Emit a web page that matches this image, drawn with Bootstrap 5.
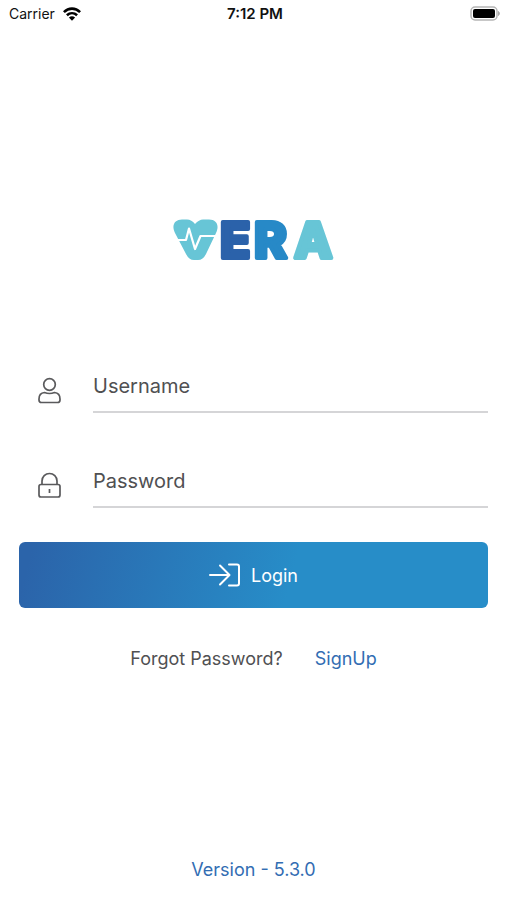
<!DOCTYPE html>
<html lang="en">
<head>
<meta charset="utf-8">
<meta name="viewport" content="width=device-width, initial-scale=1">
<title>VERA Login</title>
<link rel="stylesheet" href="https://cdn.jsdelivr.net/npm/bootstrap@5.3.0/dist/css/bootstrap.min.css">
<style>
  body { font-family: Inter, "Liberation Sans", sans-serif; color: #505052; background: #fff; }
  .status-bar { height: 28px; padding: 0 6px 0 9px; color: #111; font-size: 14px; line-height: 28px; }
  .status-bar .time { font-size: 15px; font-weight: 600; }
  .brand { margin: 174px 0 0; line-height: 0; }
  .brand text { font: 800 50px Inter, "Liberation Sans", sans-serif; stroke-width: 4px; stroke-linejoin: round; }
  .login-form { margin-top: 80px; padding: 0 19px; }
  .field { height: 55px; margin-bottom: 40px; }
  .field label { flex: 0 0 74px; padding: 19px 0 0 18px; line-height: 0; }
  .field .form-control { border-bottom: 2px solid #d5d5d7; border-radius: 0; padding: 13px 0 11px; font-size: 20px; line-height: 28px; color: #505052; height: 55px; background: none; }
  .field .form-control::placeholder { color: #505052; opacity: 1; }
  .field .form-control:focus { box-shadow: none; border-color: #2b67ac; }
  .btn-login { height: 66px; margin-top: -6px; border: 0; border-radius: 6px; color: #fff; font-size: 18px; background: linear-gradient(105deg, #2b64aa 3%, #278dc8 58%); }
  .btn-login:hover { color: #fff; }
  .links { margin-top: 37px; gap: 32px; font-size: 18px; line-height: 28px; }
  .blue { color: #326db3; }
  .version { font-size: 18px; line-height: 28px; padding-bottom: 16px; }
</style>
<script defer src="https://cdn.jsdelivr.net/npm/bootstrap@5.3.0/dist/js/bootstrap.bundle.min.js"></script>
</head>
<body class="d-flex flex-column min-vh-100">
<header class="status-bar row g-0 align-items-center">
  <div class="col d-flex align-items-center gap-2">
    <span>Carrier</span>
    <svg width="18" height="17" viewBox="1 0 18 17" fill="none" stroke="#000" stroke-width="2.600" aria-hidden="true">
      <path d="M1.900 6.100C6.600 1.400 13.400 1.400 18.100 6.100M4.900 9.300C7.900 6.500 12.100 6.500 15.100 9.300"/>
      <path d="M10 14.800 6.900 11.600Q10 9 13.100 11.600Z" fill="#000" stroke="none"/>
    </svg>
  </div>
  <div class="col-auto time">7:12 PM</div>
  <div class="col d-flex justify-content-end">
    <svg width="32" height="16" viewBox="0 0 32 16" aria-hidden="true">
      <rect x="2" y="1" width="26" height="13" rx="4" fill="#fff" stroke="#b5b5b5" stroke-width="1.500"/>
      <rect x="4" y="3" width="22" height="9" rx="2" fill="#000"/>
      <path d="M29.500 5.500v4q2-2 0-4" fill="#aaa" stroke="#aaa"/>
    </svg>
  </div>
</header>

<main class="flex-grow-1 d-flex flex-column">
  <h1 class="brand text-center">
    <svg width="164" height="76" viewBox="0 -11 164 76">
      <path d="M10 6.500H15Q19.500 6.500 23 11Q27 6.500 31 6.500H37C45 6.500 47.500 13 44 20L34 41Q31 47 26 47H22Q17 47 14 41L3 20C-1 12 3 6.500 10 6.500Z" fill="#67c5d6"/>
      <path d="M4 27H14L17 15.500L23 36L28.500 23H47" fill="none" stroke="#fff" stroke-width="2.200" stroke-linejoin="round"/>
      <text x="48" y="45" fill="#2b62aa" stroke="#2b62aa">E</text>
      <text x="82" y="45" fill="#2789c7" stroke="#2789c7">R</text>
      <text x="122" y="45" fill="#67c5d6" stroke="#67c5d6">A</text>
    </svg>
  </h1>

  <form class="login-form">
    <div class="field d-flex">
      <label for="username">
        <svg width="24" height="28" viewBox="0 0 24 28" fill="none" stroke="#5a5a5c" stroke-width="1.700" role="img" aria-label="Username">
          <circle cx="12.500" cy="7.500" r="5.800"/>
          <path d="M7.500 15.500Q12.500 17.500 17.500 15.500Q23 16 23 22V23Q23 25.500 20.500 25.500H4.500Q2 25.500 2 23V22Q2 16 7.500 15.500Z" stroke-linejoin="round"/>
        </svg>
      </label>
      <input class="form-control border-top-0 border-start-0 border-end-0" type="text" id="username" placeholder="Username" autocomplete="username">
    </div>
    <div class="field d-flex">
      <label for="password">
        <svg width="24" height="28" viewBox="0 0 24 28" fill="none" stroke="#5a5a5c" stroke-width="1.700" role="img" aria-label="Password">
          <rect x="2" y="12.500" width="21" height="12.500" rx="2"/>
          <path d="M5 12.500V9a7.500 7.500 0 0 1 15 0V12.500M12.500 17v4"/>
        </svg>
      </label>
      <input class="form-control border-top-0 border-start-0 border-end-0" type="password" id="password" placeholder="Password" autocomplete="current-password">
    </div>
    <button class="btn btn-login w-100 d-flex align-items-center justify-content-center gap-2" type="submit">
      <svg width="34" height="26" viewBox="0 0 34 26" fill="none" stroke="#fff" stroke-width="2" stroke-linecap="round" stroke-linejoin="round" aria-hidden="true">
        <path d="M1 13H20M11 3.500 20.500 13 11 22.500M20 2.500H28Q30 2.500 30 4.500V21.500Q30 23.500 28 23.500H20"/>
      </svg>
      <span>Login</span>
    </button>
  </form>

  <nav class="links d-flex justify-content-center" aria-label="Account">
    <a class="text-reset text-decoration-none" href="#forgot">Forgot Password?</a>
    <a class="blue text-decoration-none" href="#signup">SignUp</a>
  </nav>
</main>

<footer class="version blue text-center">Version - 5.3.0</footer>
</body>
</html>
